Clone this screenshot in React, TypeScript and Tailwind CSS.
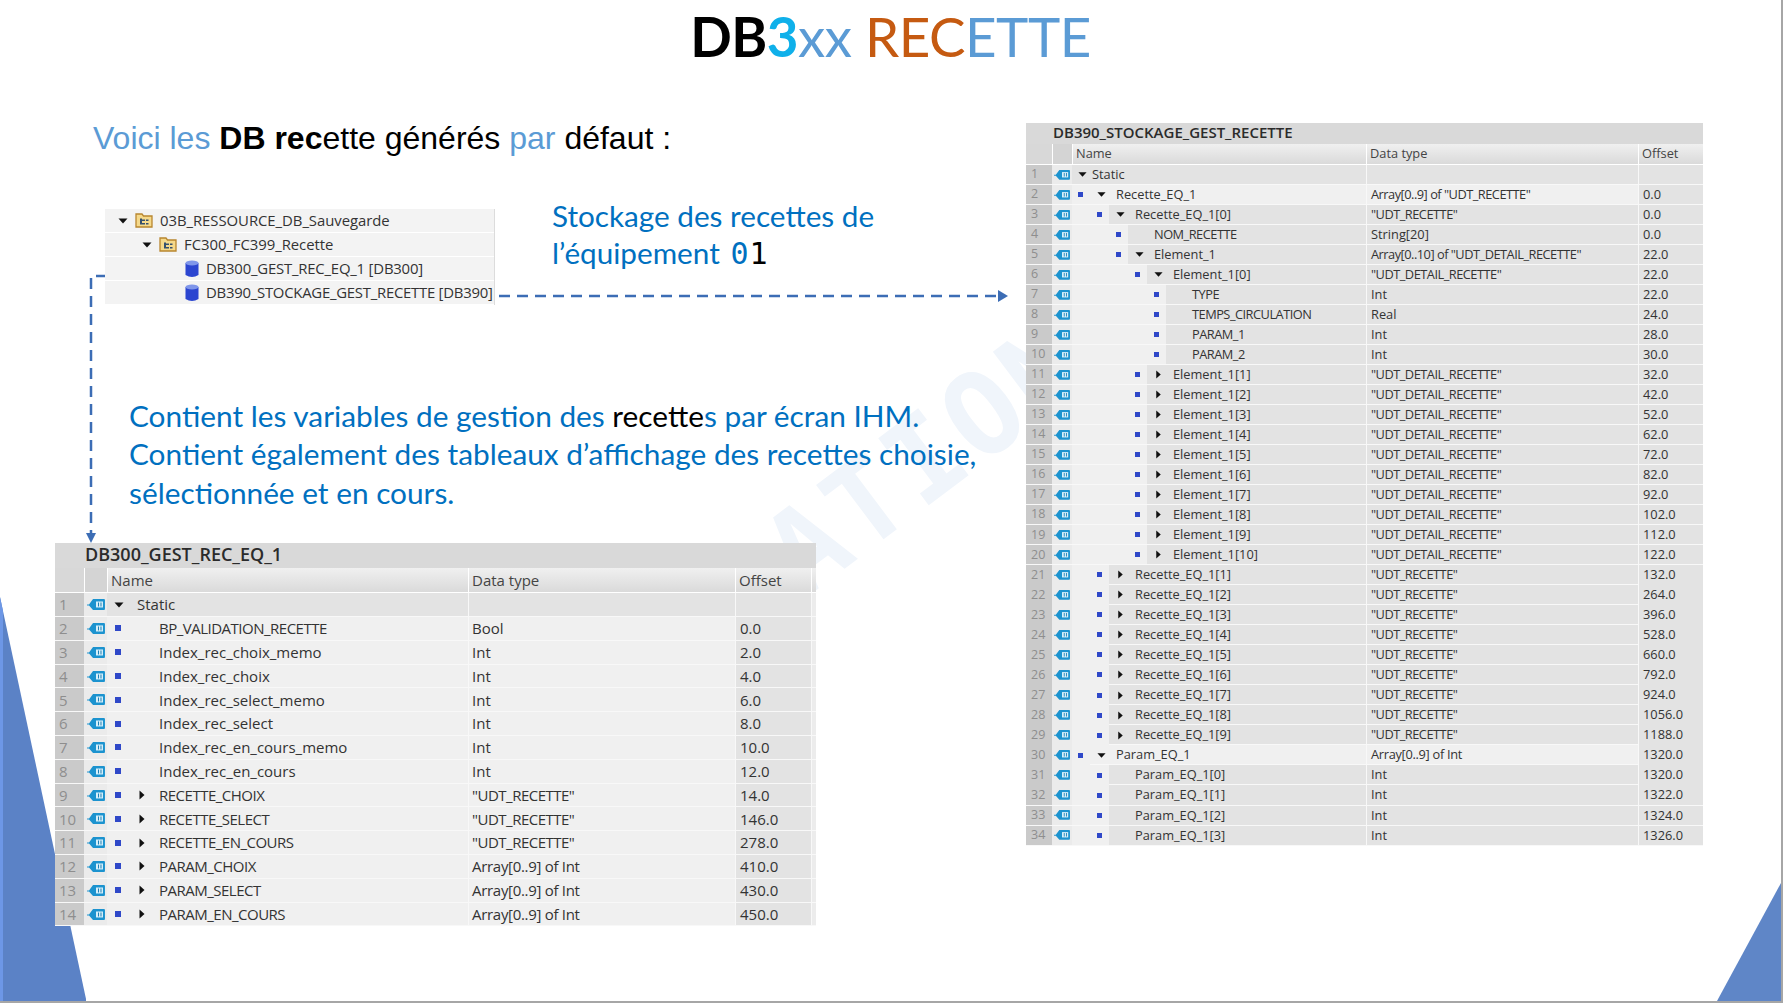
import React from 'react';

interface Row {
  name: string;
  type: string;
  offset: string;
  level: number;
  toggle?: 'open' | 'closed';
  noMarker?: boolean;
  light?: boolean;
}

const gestRows: Row[] = [
  { name: 'Static', type: '', offset: '', level: 0, toggle: 'open', noMarker: true },
  { name: 'BP_VALIDATION_RECETTE', type: 'Bool', offset: '0.0', level: 0, light: true },
  { name: 'Index_rec_choix_memo', type: 'Int', offset: '2.0', level: 0, light: true },
  { name: 'Index_rec_choix', type: 'Int', offset: '4.0', level: 0, light: true },
  { name: 'Index_rec_select_memo', type: 'Int', offset: '6.0', level: 0, light: true },
  { name: 'Index_rec_select', type: 'Int', offset: '8.0', level: 0, light: true },
  { name: 'Index_rec_en_cours_memo', type: 'Int', offset: '10.0', level: 0, light: true },
  { name: 'Index_rec_en_cours', type: 'Int', offset: '12.0', level: 0, light: true },
  { name: 'RECETTE_CHOIX', type: '"UDT_RECETTE"', offset: '14.0', level: 0, toggle: 'closed', light: true },
  { name: 'RECETTE_SELECT', type: '"UDT_RECETTE"', offset: '146.0', level: 0, toggle: 'closed', light: true },
  { name: 'RECETTE_EN_COURS', type: '"UDT_RECETTE"', offset: '278.0', level: 0, toggle: 'closed', light: true },
  { name: 'PARAM_CHOIX', type: 'Array[0..9] of Int', offset: '410.0', level: 0, toggle: 'closed', light: true },
  { name: 'PARAM_SELECT', type: 'Array[0..9] of Int', offset: '430.0', level: 0, toggle: 'closed', light: true },
  { name: 'PARAM_EN_COURS', type: 'Array[0..9] of Int', offset: '450.0', level: 0, toggle: 'closed', light: true },
];

const detail = '"UDT_DETAIL_RECETTE"';
const udt = '"UDT_RECETTE"';

const stockRows: Row[] = [
  { name: 'Static', type: '', offset: '', level: 0, toggle: 'open', noMarker: true },
  { name: 'Recette_EQ_1', type: 'Array[0..9] of "UDT_RECETTE"', offset: '0.0', level: 0, toggle: 'open', light: true },
  { name: 'Recette_EQ_1[0]', type: udt, offset: '0.0', level: 1, toggle: 'open' },
  { name: 'NOM_RECETTE', type: 'String[20]', offset: '0.0', level: 2 },
  { name: 'Element_1', type: 'Array[0..10] of "UDT_DETAIL_RECETTE"', offset: '22.0', level: 2, toggle: 'open' },
  { name: 'Element_1[0]', type: detail, offset: '22.0', level: 3, toggle: 'open' },
  { name: 'TYPE', type: 'Int', offset: '22.0', level: 4 },
  { name: 'TEMPS_CIRCULATION', type: 'Real', offset: '24.0', level: 4 },
  { name: 'PARAM_1', type: 'Int', offset: '28.0', level: 4 },
  { name: 'PARAM_2', type: 'Int', offset: '30.0', level: 4 },
  { name: 'Element_1[1]', type: detail, offset: '32.0', level: 3, toggle: 'closed' },
  { name: 'Element_1[2]', type: detail, offset: '42.0', level: 3, toggle: 'closed' },
  { name: 'Element_1[3]', type: detail, offset: '52.0', level: 3, toggle: 'closed' },
  { name: 'Element_1[4]', type: detail, offset: '62.0', level: 3, toggle: 'closed' },
  { name: 'Element_1[5]', type: detail, offset: '72.0', level: 3, toggle: 'closed' },
  { name: 'Element_1[6]', type: detail, offset: '82.0', level: 3, toggle: 'closed' },
  { name: 'Element_1[7]', type: detail, offset: '92.0', level: 3, toggle: 'closed' },
  { name: 'Element_1[8]', type: detail, offset: '102.0', level: 3, toggle: 'closed' },
  { name: 'Element_1[9]', type: detail, offset: '112.0', level: 3, toggle: 'closed' },
  { name: 'Element_1[10]', type: detail, offset: '122.0', level: 3, toggle: 'closed' },
  { name: 'Recette_EQ_1[1]', type: udt, offset: '132.0', level: 1, toggle: 'closed' },
  { name: 'Recette_EQ_1[2]', type: udt, offset: '264.0', level: 1, toggle: 'closed' },
  { name: 'Recette_EQ_1[3]', type: udt, offset: '396.0', level: 1, toggle: 'closed' },
  { name: 'Recette_EQ_1[4]', type: udt, offset: '528.0', level: 1, toggle: 'closed' },
  { name: 'Recette_EQ_1[5]', type: udt, offset: '660.0', level: 1, toggle: 'closed' },
  { name: 'Recette_EQ_1[6]', type: udt, offset: '792.0', level: 1, toggle: 'closed' },
  { name: 'Recette_EQ_1[7]', type: udt, offset: '924.0', level: 1, toggle: 'closed' },
  { name: 'Recette_EQ_1[8]', type: udt, offset: '1056.0', level: 1, toggle: 'closed' },
  { name: 'Recette_EQ_1[9]', type: udt, offset: '1188.0', level: 1, toggle: 'closed' },
  { name: 'Param_EQ_1', type: 'Array[0..9] of Int', offset: '1320.0', level: 0, toggle: 'open', light: true },
  { name: 'Param_EQ_1[0]', type: 'Int', offset: '1320.0', level: 1 },
  { name: 'Param_EQ_1[1]', type: 'Int', offset: '1322.0', level: 1 },
  { name: 'Param_EQ_1[2]', type: 'Int', offset: '1324.0', level: 1 },
  { name: 'Param_EQ_1[3]', type: 'Int', offset: '1326.0', level: 1 },
];

// The capture squeezes capitals together, so long upper-case runs get tighter tracking
const caps = (text: string) => {
  if (/[A-Z]{3}/.test(text)) return 'tracking-[-0.5px]';
  return text.startsWith('Array') ? 'tracking-[-0.3px]' : '';
};

function TagIcon({ size }: { size: number }) {
  return (
    <svg width={size} height={size * 0.72} viewBox="0 0 18 13" className="shrink-0">
      <path d="M0 6.5 H2 L6 1 H17 Q18 1 18 2 V11 Q18 12 17 12 H6 L2 7.5 H0 Z" fill="#1c93cf" />
      <rect x="9" y="3.5" width="7" height="6" fill="#d8f0fa" />
      <rect x="11" y="4.5" width="1" height="4" fill="#1c7fb5" />
      <rect x="13.5" y="4.5" width="1" height="4" fill="#1c7fb5" />
    </svg>
  );
}

function Toggle({ kind, size }: { kind: 'open' | 'closed'; size: number }) {
  return (
    <svg width={size} height={size} viewBox="0 0 10 10" className="shrink-0">
      {kind === 'open' ? <path d="M0.5 2.5 H9.5 L5 7.5 Z" fill="#111" /> : <path d="M2.5 0.5 V9.5 L7.5 5 Z" fill="#111" />}
    </svg>
  );
}

function DbTable({ title, rows, large }: { title: string; rows: Row[]; large?: boolean }) {
  // column widths and the indent step differ between the two captures
  const step = large ? 0 : 19;
  const markerPad = large ? 8 : 6;
  const gridCols = large ? 'grid-cols-[29px_23px_361px_267px_76px_5px]' : 'grid-cols-[26px_20px_294px_272px_65px]';
  const rowH = large ? 'h-[23.8px]' : 'h-[20.03px]';
  const textSize = large ? 'text-[15px]' : 'text-[12.8px]';
  const iconSize = large ? 18 : 16;
  const toggleSize = large ? 10 : 9;
  const headerCell = 'flex items-center border-l border-white pl-[3px] text-[#444]';

  return (
    <div className={`flex flex-col text-[#333] font-['Open_Sans',sans-serif] ${textSize}`}>
      <div
        className={`flex items-center pb-[2px] bg-[#d9d9d9] font-semibold text-[#2b2b2b] ${
          large ? 'h-[25px] pl-[30px] text-[18px]' : 'h-[21px] pl-[27px] text-[15px]'
        }`}
      >
        {title}
      </div>
      <div className={`grid ${gridCols} bg-linear-to-b from-[#f0f0f0] to-[#dadada] border-b border-white ${large ? 'h-[25px]' : 'h-[21px]'}`}>
        <div className="bg-[#d8d8d8]" />
        <div className="bg-[#d4d4d4] border-l border-white" />
        <div className={headerCell}>Name</div>
        <div className={headerCell}>Data type</div>
        <div className={headerCell}>Offset</div>
        {large && <div className="border-l border-white" />}
      </div>
      {rows.map((row, i) => (
        <div key={row.name} className={`grid ${gridCols} ${rowH} border-b border-[#f8f8f8] ${row.light ? 'bg-[#f0f0f0]' : 'bg-[#e3e3e3]'}`}>
          <div className={`flex items-center bg-[#cacaca] text-[#8e8e8e] ${large ? 'pl-[4px] text-[15px]' : 'pl-[5px] text-[12.5px]'}`}>{i + 1}</div>
          <div className="flex items-center justify-center bg-[#ebebeb]">
            <TagIcon size={iconSize} />
          </div>
          {row.noMarker ? (
            <div className={`flex items-center whitespace-nowrap ${large ? 'pl-[7px]' : 'pl-[6px]'}`}>
              <Toggle kind="open" size={toggleSize} />
              <span className={large ? 'ml-[13px]' : 'ml-[5px]'}>{row.name}</span>
            </div>
          ) : (
            <div className="flex items-center overflow-hidden whitespace-nowrap">
              <div
                className="flex items-center self-stretch shrink-0 bg-[#f0f0f0]"
                style={{ paddingLeft: markerPad + row.level * step, paddingRight: 7 }}
              >
                <span className={`shrink-0 bg-[#2f48c8] ${large ? 'w-[6px] h-[6px]' : 'w-[5px] h-[5px]'}`} />
              </div>
              <span className={`flex shrink-0 ${large ? 'w-[31px] pl-[9px]' : 'w-[26px] pl-[7px]'}`}>
                {row.toggle ? <Toggle kind={row.toggle} size={toggleSize} /> : null}
              </span>
              <span className={caps(row.name)}>{row.name}</span>
            </div>
          )}
          <div className={`flex items-center border-l border-[#f8f8f8] whitespace-nowrap ${large ? 'pl-[3px]' : 'pl-[4px]'} ${caps(row.type)}`}>{row.type}</div>
          <div className="flex items-center border-l border-[#f8f8f8] bg-[#e3e3e3] pl-[4px] whitespace-nowrap">{row.offset}</div>
          {large && <div className="bg-[#ececec] border-l border-[#f8f8f8]" />}
        </div>
      ))}
    </div>
  );
}

function FolderIcon() {
  return (
    <svg width="18" height="15" viewBox="0 0 18 15" className="shrink-0">
      <path d="M1 1 H7 L8.5 3 H17 V14 H1 Z" fill="#f5d98b" stroke="#b8862f" strokeWidth="1.3" />
      <rect x="5" y="5.5" width="2" height="6" fill="#35506e" />
      <rect x="7" y="6.5" width="3" height="1.5" fill="#35506e" />
      <rect x="7" y="10" width="3" height="1.5" fill="#35506e" />
      <rect x="11" y="6.5" width="2.5" height="1.5" fill="#35506e" />
      <rect x="11" y="10" width="2.5" height="1.5" fill="#35506e" />
    </svg>
  );
}

function DbIcon() {
  return (
    <svg width="14" height="18" viewBox="0 0 14 18" className="shrink-0">
      <path d="M0.5 3 V15 Q7 19 13.5 15 V3 Z" fill="#2b45d0" />
      <ellipse cx="7" cy="3" rx="6.5" ry="2.6" fill="#7f96ea" />
    </svg>
  );
}

function ProjectTree() {
  const rowClass = 'flex items-center h-[24px] border-b border-white bg-[#f3f3f3] whitespace-nowrap';
  return (
    <div className="w-[390px] shrink-0 font-['Open_Sans',sans-serif] text-[14.9px] text-[#333] border-r border-[#dcdcdc]">
      <div className={`${rowClass} pl-[13px] gap-[7px]`}>
        <Toggle kind="open" size={10} />
        <FolderIcon />
        <span className="tracking-[-0.05px]">03B_RESSOURCE_DB_Sauvegarde</span>
      </div>
      <div className={`${rowClass} pl-[37px] gap-[7px]`}>
        <Toggle kind="open" size={10} />
        <FolderIcon />
        <span className="tracking-[-0.05px]">FC300_FC399_Recette</span>
      </div>
      <div className={`${rowClass} pl-[80px] gap-[7px]`}>
        <DbIcon />
        <span className="tracking-[-0.2px]">DB300_GEST_REC_EQ_1 [DB300]</span>
      </div>
      <div className={`${rowClass} pl-[80px] gap-[7px] bg-[#efefef]`}>
        <DbIcon />
        <span className="tracking-[-0.25px]">DB390_STOCKAGE_GEST_RECETTE [DB390]</span>
      </div>
    </div>
  );
}

export default function App() {
  return (
    <div className="relative w-[1783px] h-[1003px] overflow-hidden bg-white border-b-2 border-r-2 border-[#a6a6a6] font-['Lato',sans-serif]">
      {/* Decorative corners */}
      <svg className="absolute left-0 bottom-0" width="90" height="404" viewBox="0 0 90 404">
        <path d="M0 0 L86 402 V404 H0 Z" fill="#5b82c6" />
        <path d="M0 0 L3 14 V404 H0 Z" fill="#6d97e6" />
      </svg>
      <svg className="absolute right-0 bottom-0" width="64" height="118" viewBox="0 0 64 118">
        <path d="M64 0 V118 H0 Z" fill="#5f86c7" />
      </svg>

      {/* Faint watermark behind the text */}
      <div className="absolute left-[743px] top-[392px] -rotate-[37deg] font-['DejaVu_Sans_Mono',monospace] text-[115px] leading-[130px] font-bold tracking-[4px] text-[#f0f5fb]">
        ATION
      </div>

      {/* Dashed connectors */}
      <svg className="absolute left-0 top-0" width="1783" height="1003" fill="none">
        <path d="M107 276 H91 V534" stroke="#3c6db5" strokeWidth="2.5" strokeDasharray="11 7" />
        <path d="M86 533 H96 L91 543 Z" fill="#3c6db5" />
        <path d="M499 296 H1000" stroke="#3c6db5" strokeWidth="2.5" strokeDasharray="11 7" />
        <path d="M998 290 L1008 296 L998 302 Z" fill="#3c6db5" />
      </svg>

      <div className="relative flex flex-col h-full">
        <h1 className="h-[76px] pt-[1px] text-center text-[54.7px] leading-[70px] tracking-[-0.5px] whitespace-nowrap font-['Lato',sans-serif]">
          <span className="font-bold text-black">DB</span>
          <span className="font-bold text-[#0fb0ea]">3</span>
          <span className="text-[#5b9bd5]">xx </span>
          <span className="text-[#c55a11]">REC</span>
          <span className="text-[#5b9bd5]">ETTE</span>
        </h1>

        <div className="flex items-start">
          {/* Left side */}
          <div className="w-[1026px] shrink-0 flex flex-col">
            <p className="mt-[41px] ml-[93px] font-['Liberation_Sans',sans-serif] text-[32px] leading-[42px] text-[#5b9bd5] whitespace-nowrap">
              Voici les <b className="text-black">DB rec</b>
              <span className="text-black">ette générés</span> par <span className="text-black">défaut :</span>
            </p>

            <div className="flex mt-[50px] ml-[105px]">
              <ProjectTree />
              <p className="ml-[57px] -mt-[12px] text-[29.7px] leading-[37px] text-[#0070c0] whitespace-nowrap">
                Stockage des recettes de
                <br />
                l’équipement <span className="ml-[3px] font-['DejaVu_Sans_Mono',monospace] text-[30px] tracking-[1px]">0</span>
                <span className="font-['DejaVu_Sans_Mono',monospace] text-[30px] text-black">1</span>
              </p>
            </div>

            <p className="mt-[92px] ml-[129px] text-[29.8px] leading-[38.4px] text-[#0070c0] whitespace-nowrap">
              Contient les variables de gestion des <span className="text-black">recette</span>s par écran IHM.
              <br />
              Contient également des tableaux d’affichage des recettes choisie,
              <br />
              sélectionnée et en cours.
            </p>

            <div className="mt-[31px] ml-[55px] w-[761px]">
              <DbTable title="DB300_GEST_REC_EQ_1" rows={gestRows} large />
            </div>
          </div>

          {/* Right side */}
          <div className="mt-[47px] w-[677px] shrink-0">
            <DbTable title="DB390_STOCKAGE_GEST_RECETTE" rows={stockRows} />
          </div>
        </div>
      </div>
    </div>
  );
}
